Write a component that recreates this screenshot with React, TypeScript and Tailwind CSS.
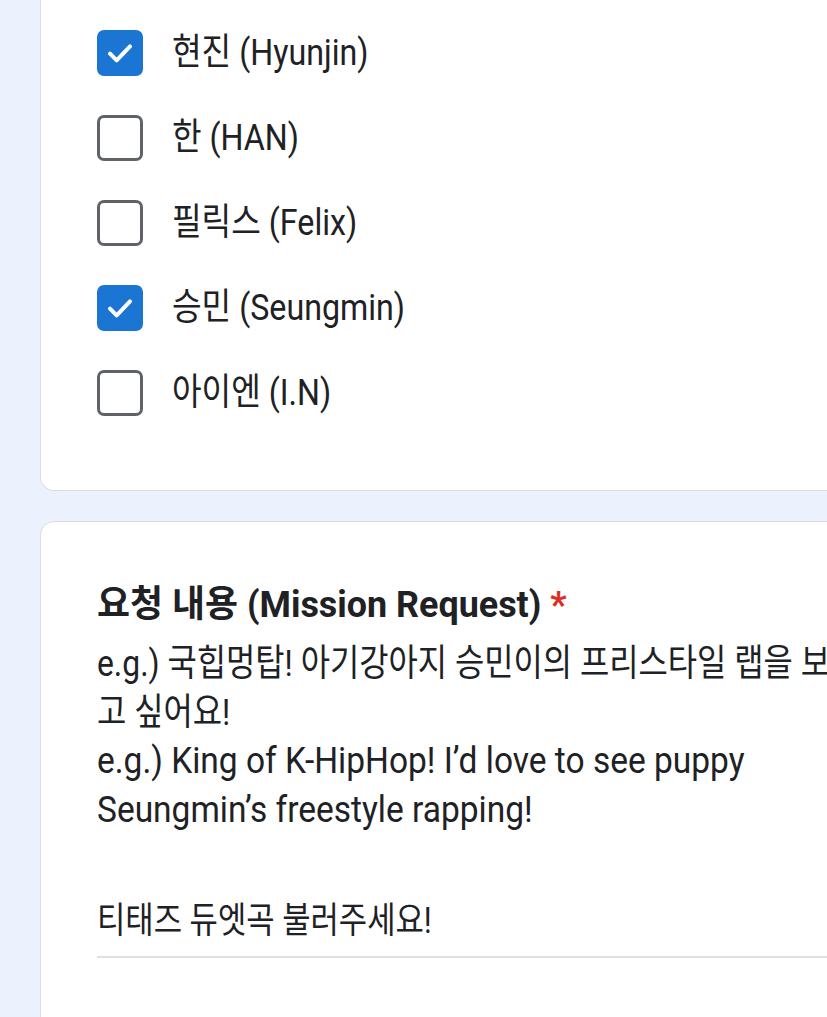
import React from "react";

const members = [
  { name: "현진 (Hyunjin)", checked: true },
  { name: "한 (HAN)", checked: false },
  { name: "필릭스 (Felix)", checked: false },
  { name: "승민 (Seungmin)", checked: true },
  { name: "아이엔 (I.N)", checked: false },
];

const CheckBox = ({ checked }: { checked: boolean }) => (
  <div
    className={`w-[46px] h-[46px] rounded-[7px] flex items-center justify-center flex-shrink-0 ${
      checked ? "bg-[#1a76d2]" : "bg-white border-[3.5px] border-[#5f6368]"
    }`}
    role="checkbox"
    aria-checked={checked}
  >
    {checked && (
      <svg width="32" height="32" viewBox="0 0 24 24" fill="none">
        <path d="M4.5 12.5l5 5L19.5 7" stroke="white" strokeWidth="3" strokeLinecap="round" strokeLinejoin="round" />
      </svg>
    )}
  </div>
);

export default function App() {
  return (
    <div
      className="w-[827px] h-[1017px] overflow-hidden bg-[#ebf2fd] text-[#202124]"
      style={{ fontFamily: "Roboto, 'Noto Sans CJK KR', sans-serif" }}
    >
      <div className="ml-[40px] w-[830px] flex flex-col gap-[30px]">
        {/* member checklist card */}
        <div className="bg-white border border-t-0 border-[#dadce0] rounded-b-[14px] pl-[56px] pt-[10px] pb-[55px]">
          {members.map((m) => (
            <div key={m.name} className="h-[85px] flex items-center gap-[29px]">
              <CheckBox checked={m.checked} />
              <span className="inline-block origin-left scale-x-[0.87] text-[37px] leading-none whitespace-nowrap">
                {m.name}
              </span>
            </div>
          ))}
        </div>

        {/* mission request card */}
        <div className="bg-white border border-[#dadce0] rounded-t-[14px] pl-[56px] pt-[63px] h-[520px]">
          <div className="inline-block origin-left scale-x-[0.97] text-[37px] font-bold leading-[40px] whitespace-nowrap">
            요청 내용 (Mission Request) <span className="text-[#d93025]">*</span>
          </div>
          <div className="mt-[15px] text-[37px] leading-[48.5px] whitespace-nowrap">
            <span className="inline-block origin-left scale-x-[0.86]">e.g.) 국힙멍탑! 아기강아지 승민이의 프리스타일 랩을 보</span>
            <br />
            <span className="inline-block origin-left scale-x-[0.86]">고 싶어요!</span>
            <br />
            <span className="inline-block origin-left scale-x-[0.905]">e.g.) King of K-HipHop! I’d love to see puppy</span>
            <br />
            <span className="inline-block origin-left scale-x-[0.905]">Seungmin’s freestyle rapping!</span>
          </div>
          <div className="mt-[67px] border-b-2 border-[#e0e0e0] pb-[15px] h-[57px]">
            <span className="inline-block origin-left scale-x-[0.855] text-[36px] leading-[40px] whitespace-nowrap">
              티태즈 듀엣곡 불러주세요!
            </span>
          </div>
        </div>
      </div>
    </div>
  );
}
